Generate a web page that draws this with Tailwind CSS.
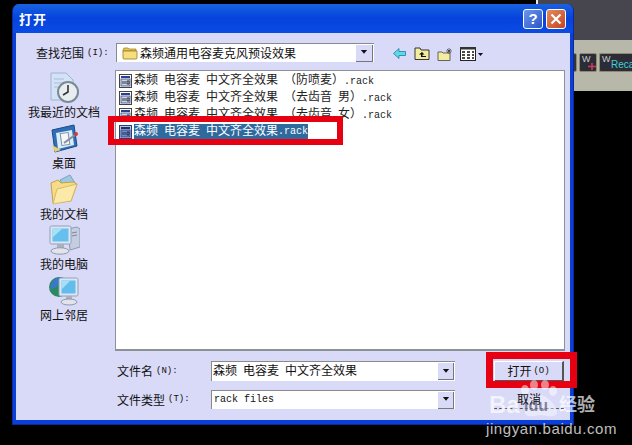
<!DOCTYPE html>
<html lang="zh">
<head>
  <meta charset="UTF-8" />
  <title>打开</title>
  <script src="https://cdn.jsdelivr.net/npm/@tailwindcss/browser@4"></script>
</head>
<body class="bg-black">
  <!-- icons -->
  <svg width="0" height="0" class="absolute">
    <symbol id="rack" viewBox="0 0 13 14">
      <rect x="0.5" y="0.5" width="12" height="13" fill="#fff" stroke="#444"/>
      <rect x="2" y="2" width="9" height="2" fill="#2a3f8f"/>
      <rect x="2" y="5" width="9" height="7" fill="#c9d4ec" stroke="#39487f" stroke-width="0.8"/>
      <path d="M4 7v3M6 7v3M8 7h2v3H8z" stroke="#222" stroke-width="0.9" fill="none"/>
    </symbol>
    <symbol id="rack-sel" viewBox="0 0 13 14">
      <rect x="0.5" y="0.5" width="12" height="13" fill="#b9c6e6" stroke="#2c3f78"/>
      <rect x="2" y="2" width="9" height="2" fill="#1f2f78"/>
      <rect x="2" y="5" width="9" height="7" fill="#6f8cc4" stroke="#2c3f78" stroke-width="0.8"/>
      <path d="M4 7v3M6 7v3M8 7h2v3H8z" stroke="#1a2350" stroke-width="0.9" fill="none"/>
    </symbol>
    <symbol id="arrow" viewBox="0 0 10 8">
      <path d="M0 0h10L5 6z" fill="#111"/>
    </symbol>
  </svg>

  <div class="relative w-[632px] h-[445px] overflow-hidden bg-black font-['Noto_Sans_CJK_SC',sans-serif] text-[12px] leading-none text-[#111]">
    <!-- app behind the dialog -->
    <div class="absolute left-[536px] top-0 w-[96px] h-[91px] flex flex-col border-l-2 border-[#e8e8e8]">
      <div class="h-[40px] bg-[#47464e]"></div>
      <div class="h-[51px] bg-[#b7b7aa] flex items-center gap-[2px] pb-[6px] font-['Liberation_Sans',sans-serif]">
        <div class="w-[39px] h-[19px] bg-[#33343c] border border-[#8c8a70] rounded-[2px]"></div>
        <div class="relative w-[18px] h-[19px] bg-[#2b2c36] border border-[#8c8a70] rounded-[2px] text-[9px] text-[#ccc]">
          <span class="absolute left-[2px] top-[1px]">W</span>
          <svg class="absolute left-[8px] top-[9px]" width="8" height="7" viewBox="0 0 8 7"><path d="M0 3.5h8M4 0v7" stroke="#d03a58" stroke-width="1.6"/></svg>
        </div>
        <div class="relative w-[33px] h-[19px] bg-[#2b2c36] border-y border-l border-[#8c8a70] rounded-l-[2px] text-[#ccc] text-[9px]">
          <span class="absolute left-[2px] top-[1px]">W</span>
          <span class="absolute left-[11px] top-[6px] text-[10px] text-[#3fd0dc]">Reca</span>
        </div>
      </div>
    </div>

    <!-- dialog -->
    <div class="absolute left-[12px] top-[4px] w-[562px] h-[421px] flex flex-col rounded-t-[7px] overflow-hidden bg-[#0a3fd8] px-[3px] pb-[4px] border-l border-r border-b border-[#0a2a9c]">
      <!-- title bar -->
      <div class="h-[29px] shrink-0 -mx-[3px] flex items-center justify-between pl-[6px] pr-[7px] bg-gradient-to-b from-[#1a62e0] via-[#0742dc] to-[#0a4ce4]">
        <span class="text-white font-bold text-[13px] tracking-[1px]">打开</span>
        <div class="flex gap-[3px]">
          <div class="w-[20px] h-[20px] rounded-[3px] border border-white bg-gradient-to-br from-[#6d96ea] to-[#2a55c8] flex items-center justify-center text-white font-bold text-[15px] font-['Liberation_Sans',sans-serif]">?</div>
          <div class="w-[20px] h-[20px] rounded-[3px] border border-white bg-gradient-to-br from-[#e28a60] to-[#c4431c] flex items-center justify-center">
            <svg width="12" height="12" viewBox="0 0 12 12"><path d="M1.5 1.5l9 9M10.5 1.5l-9 9" stroke="#fff" stroke-width="2.2"/></svg>
          </div>
        </div>
      </div>

      <!-- client area -->
      <div class="flex-1 flex flex-col bg-[#d9daf7]">
        <!-- look in -->
        <div class="h-[37px] shrink-0 flex items-start pt-[10px] pl-[20px]">
          <div class="w-[80px] h-[19px] flex items-center pt-[1px]">查找范围<span class="ml-[3px] font-['Liberation_Mono',monospace] text-[9px]">(I):</span></div>
          <div class="w-[258px] h-[19px] flex items-center bg-white border-l border-t border-[#8a8a8a] pl-[5px] pr-[1px]">
            <svg width="16" height="13" viewBox="0 0 16 13"><path d="M1 3l1-2h4l1 1h7v2H1z" fill="#e8c850" stroke="#9a7a20" stroke-width="0.7"/><path d="M1 4h14v7a1 1 0 0 1-1 1H2a1 1 0 0 1-1-1z" fill="#f7df80" stroke="#9a7a20" stroke-width="0.8"/></svg>
            <span class="ml-[2px] flex-1">森频通用电容麦克风预设效果</span>
            <div class="w-[17px] h-[17px] bg-[#d9daf7] border-r border-b border-[#777] flex items-center justify-center"><svg width="8" height="5"><use href="#arrow"/></svg></div>
          </div>
          <!-- toolbar -->
          <div class="flex items-center h-[19px] ml-[19px] pt-[2px]">
            <svg width="13" height="11" viewBox="0 0 13 11"><path d="M6 0.5L0.5 5.5 6 10.5V7.5h6.5v-4H6z" fill="#5fd8ec" stroke="#1f7f9a" stroke-width="0.8"/></svg>
            <svg class="ml-[8px]" width="16" height="13" viewBox="0 0 16 13"><path d="M1 3V1h5l1 2h8v9.5H1z" fill="#f3eda0" stroke="#222" stroke-width="0.9"/><path d="M8 5L5 7.5h2V10h5V9H8.5V7.5h2z" fill="#111"/></svg>
            <svg class="ml-[7px]" width="17" height="14" viewBox="0 0 17 14"><path d="M1 5h4l1 1h7v7.5H1z" fill="#f3eda0" stroke="#555" stroke-width="0.9"/><path d="M12 1v6M9 4h6M10 2l4 4M14 2l-4 4" stroke="#333" stroke-width="0.7"/></svg>
            <svg class="ml-[6px]" width="24" height="14" viewBox="0 0 24 14"><rect x="0.5" y="0.5" width="15" height="13" fill="#fff" stroke="#222"/><rect x="0" y="0" width="16" height="2.5" fill="#333"/><path d="M2 5h3M7 5h3M12 5h2M2 8h3M7 8h3M12 8h2M2 11h3M7 11h3M12 11h2" stroke="#111" stroke-width="1.4"/><path d="M18 6h5l-2.5 3z" fill="#111"/></svg>
          </div>
        </div>

        <!-- places bar + file list -->
        <div class="h-[281px] shrink-0 flex">
          <div class="w-[99px] shrink-0 pr-[3px] flex flex-col items-center pt-[2px]">
            <div class="h-[50.75px] flex flex-col items-center">
              <svg width="32" height="31" viewBox="0 0 32 31"><path d="M3 1h15l7 7v20H3z" fill="#d3e2f5" stroke="#9fb3d4"/><path d="M6 7h10M6 11h10M6 15h8" stroke="#a9bddb"/><circle cx="20" cy="20" r="10" fill="#e8eef0" stroke="#7b8a94" stroke-width="2"/><path d="M20 13v7l-5 3" stroke="#333" stroke-width="1.6" fill="none"/></svg>
              <span class="mt-[3px]">我最近的文档</span>
            </div>
            <div class="h-[50.75px] flex flex-col items-center">
              <svg width="32" height="31" viewBox="0 0 32 31"><path d="M4 7l22-5 3 21-22 6z" fill="#2f6fb8" stroke="#1d4a84"/><path d="M8 10l16-3 2 15-16 4z" fill="#d9ecf7"/><path d="M13 10h8v12h-8z" fill="#f4f6f8" stroke="#7a8ea6" transform="rotate(-8 17 16)"/><path d="M16 20l11-8" stroke="#8a8a9a" stroke-width="2"/><circle cx="28" cy="11" r="2" fill="#c9403a"/><path d="M4 22l3 7 6-2z" fill="#e8d070"/></svg>
              <span class="mt-[3px]">桌面</span>
            </div>
            <div class="h-[50.75px] flex flex-col items-center">
              <svg width="30" height="31" viewBox="0 0 30 31"><path d="M11 6l10-5 5 8-10 6z" fill="#9cc8e0" stroke="#7da2bc"/><path d="M2 9l7-3 3 3 12-1 4 2-6 17-18 2z" fill="#f7dc88" stroke="#c4a24a"/><path d="M4 30l4-15 20-5-6 17z" fill="#fbe9a8" stroke="#d0b060" stroke-width="0.8"/></svg>
              <span class="mt-[3px]">我的文档</span>
            </div>
            <div class="h-[50.75px] flex flex-col items-center">
              <svg width="32" height="31" viewBox="0 0 32 31"><path d="M20 5l9-2 3 2v18l-10 3z" fill="#c5cde0" stroke="#8e98b0"/><path d="M24 9l5-1M24 12l5-1" stroke="#7d87a0"/><rect x="2" y="2" width="21" height="18" rx="1.5" fill="#dde6f2" stroke="#8ea0ba"/><rect x="4.5" y="4.5" width="16" height="13" fill="#66c0ee"/><path d="M4.5 4.5h10l-10 9z" fill="#a8e0f8"/><path d="M9 20h7v4H9z" fill="#a9b0bf"/><ellipse cx="12" cy="27" rx="9" ry="3.2" fill="#e2e4ea" stroke="#8e98b0"/></svg>
              <span class="mt-[3px]">我的电脑</span>
            </div>
            <div class="h-[50.75px] flex flex-col items-center">
              <svg width="32" height="31" viewBox="0 0 32 31"><circle cx="11" cy="12" r="10" fill="#2a8a5e"/><path d="M4 7a10 10 0 0 1 12-4c-2 3-6 3-6 6s-4 4-7 6a10 10 0 0 1 1-8z" fill="#3a78c8"/><rect x="11" y="3" width="19" height="18" rx="1.5" fill="#dde6f2" stroke="#8ea0ba"/><rect x="13.5" y="5.5" width="14" height="13" fill="#62bcec"/><path d="M13.5 5.5h9l-9 9z" fill="#a4def8"/><path d="M18 21h6v4h-6z" fill="#a9b0bf"/><ellipse cx="21" cy="27" rx="8" ry="3" fill="#e2e4ea" stroke="#8e98b0"/></svg>
              <span class="mt-[3px]">网上邻居</span>
            </div>
          </div>

          <div class="w-[450px] bg-white border border-[#8e9098] border-b-2 pt-[1px] pl-[3px] font-['Liberation_Mono','Noto_Sans_CJK_SC',monospace] text-[#222] [word-spacing:-1.2px]">
            <div class="h-[17px] flex items-center"><svg width="13" height="14" class="shrink-0"><use href="#rack"/></svg><span class="ml-[2px] whitespace-pre">森频 电容麦 中文齐全效果 （防喷麦）<span class="text-[10px]">.rack</span></span></div>
            <div class="h-[17px] flex items-center"><svg width="13" height="14" class="shrink-0"><use href="#rack"/></svg><span class="ml-[2px] whitespace-pre">森频 电容麦 中文齐全效果 （去齿音 男）<span class="text-[10px]">.rack</span></span></div>
            <div class="h-[17px] flex items-center"><svg width="13" height="14" class="shrink-0"><use href="#rack"/></svg><span class="ml-[2px] whitespace-pre">森频 电容麦 中文齐全效果 （去齿音 女）<span class="text-[10px]">.rack</span></span></div>
            <div class="h-[17px] flex items-center"><svg width="13" height="14" class="shrink-0"><use href="#rack-sel"/></svg><span class="ml-[2px] whitespace-pre bg-[#2f6a9f] text-white h-[15px] flex items-center">森频 电容麦 中文齐全效果<span class="text-[10px]">.rack</span></span></div>
          </div>
        </div>

        <!-- file name / type + buttons -->
        <div class="flex-1 flex flex-col pt-[10px] pl-[101px] gap-[8px]">
          <div class="flex items-start">
            <div class="w-[94px] h-[20px] flex items-center">文件名<span class="ml-[3px] font-['Liberation_Mono',monospace] text-[9px]">(N):</span></div>
            <div class="w-[244px] h-[20px] flex items-center bg-white border-l border-t border-[#8a8a8a] pl-[1px] pr-[1px] font-['Liberation_Mono','Noto_Sans_CJK_SC',monospace] whitespace-pre [word-spacing:-1.2px]">
              <span class="flex-1">森频 电容麦 中文齐全效果</span>
              <div class="w-[16px] h-[17px] bg-[#d9daf7] border-r border-b border-[#777] flex items-center justify-center"><svg width="8" height="5"><use href="#arrow"/></svg></div>
            </div>
            <div class="w-[70px] h-[21px] ml-[39px] bg-[#d9daf7] border-t border-l border-white border-r-2 border-b-2 border-r-[#555] border-b-[#555] flex items-center justify-center">打开<span class="ml-[2px] font-['Liberation_Mono',monospace] text-[9px]">(O)</span></div>
          </div>
          <div class="flex items-start">
            <div class="w-[94px] h-[19px] flex items-center">文件类型<span class="ml-[3px] font-['Liberation_Mono',monospace] text-[9px]">(T):</span></div>
            <div class="w-[244px] h-[19px] flex items-center bg-white border-l border-t border-[#8a8a8a] pl-[2px] pr-[1px] font-['Liberation_Mono',monospace] text-[10px]">
              <span class="flex-1">rack files</span>
              <div class="w-[16px] h-[17px] bg-[#d9daf7] border-r border-b border-[#777] flex items-center justify-center"><svg width="8" height="5"><use href="#arrow"/></svg></div>
            </div>
            <div class="w-[70px] h-[19px] ml-[39px] bg-[#d9daf7] border-b border-dashed border-[#555] flex items-center justify-center"><span class="relative z-10">取消</span></div>
          </div>
        </div>
      </div>
    </div>

    <!-- red annotation boxes -->
    <div class="absolute left-[108px] top-[116px] w-[235px] h-[29px] border-[6px] border-[#e60012]"></div>
    <div class="absolute left-[486px] top-[352px] w-[91px] h-[36px] border-[7px] border-[#e60012]"></div>

    <!-- jingyan watermark -->
    <div class="absolute left-[486px] top-[380px] w-[115px] h-[56px] font-['Liberation_Sans',sans-serif]">
      <svg class="absolute left-[33px] top-0" width="50" height="40" viewBox="0 0 50 40">
        <ellipse cx="6" cy="10" rx="4" ry="5" fill="#fff" fill-opacity=".5"/>
        <ellipse cx="15" cy="5" rx="4" ry="5" fill="#fff" fill-opacity=".5"/>
        <ellipse cx="26" cy="5" rx="4" ry="5" fill="#fff" fill-opacity=".5"/>
        <ellipse cx="34" cy="11" rx="4" ry="5" fill="#fff" fill-opacity=".5"/>
        <path d="M20 15c7 0 13 6 17 13 4 7-3 10-9 8-5-1-8-1-13 0-7 2-12-3-8-9 4-6 7-12 13-12z" fill="#fff" fill-opacity=".4"/>
      </svg>
      <span class="absolute left-[3px] top-[13px] text-[24px] leading-none font-bold text-white/70">Ba</span>
      <span class="absolute left-[38px] top-[18px] text-[16px] leading-none font-bold text-[#3a3a60]/60">idu</span>
      <span class="absolute left-[73px] top-[14px] text-[18px] leading-none font-bold font-['Noto_Sans_CJK_SC',sans-serif] text-white/70">经验</span>
      <span class="absolute left-0 top-[41px] text-[15px] leading-none tracking-[0.6px] text-white/75">jingyan.baidu.com</span>
    </div>
  </div>
</body>
</html>
